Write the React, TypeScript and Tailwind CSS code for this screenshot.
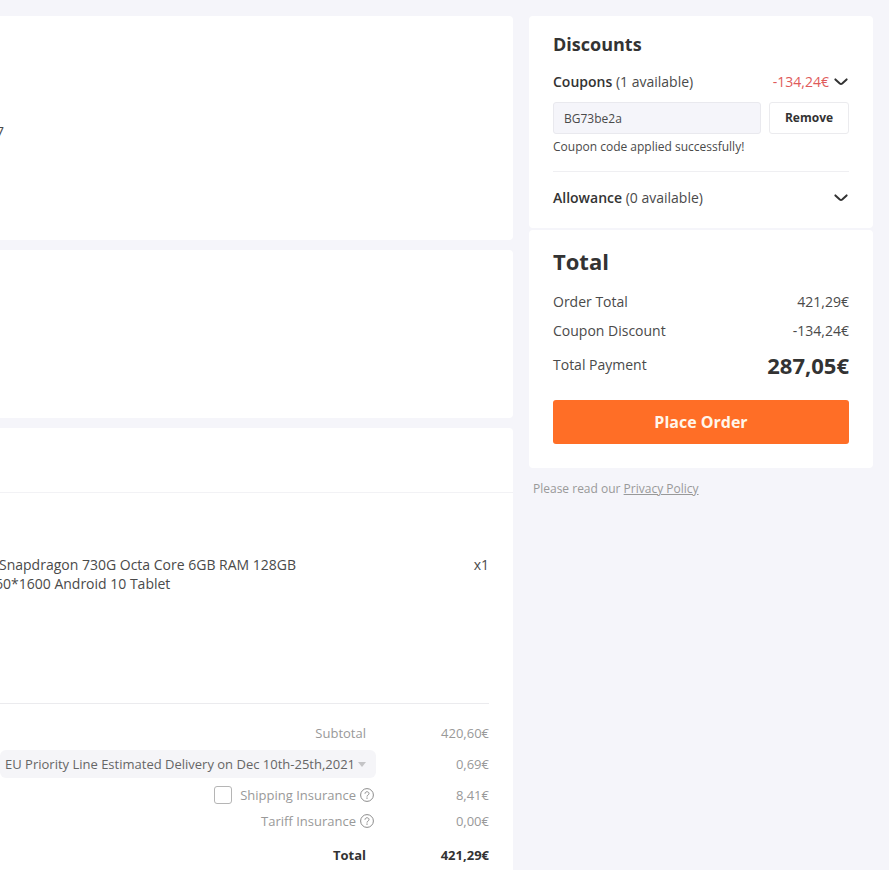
import type { ReactNode } from "react";

function Chevron() {
  return (
    <svg width="15" height="8" viewBox="0 0 15 8" fill="none" aria-hidden="true">
      <path d="M1.4 1.4 L5.8 5.5 Q7 6.5 8.2 5.5 L12.6 1.4" stroke="#333" strokeWidth="2" strokeLinecap="round" />
    </svg>
  );
}

function HelpIcon() {
  return (
    <svg width="14" height="14" viewBox="0 0 14 14" fill="none" stroke="#8c8c8c" aria-hidden="true">
      <circle cx="7" cy="7" r="6.4" />
      <path d="M5 5.7 C5 3.1 9 3.1 9 5.6 C9 7 7 7 7 8.6" />
      <path d="M7 9.6 V10.8" strokeWidth="1.2" />
    </svg>
  );
}

function CostRow({ label, value, className }: { label: ReactNode; value: string; className: string }) {
  return (
    <div className={`flex items-center justify-end ${className}`}>
      <dt className="flex items-center">{label}</dt>
      <dd className="w-[111px] shrink-0 text-right">{value}</dd>
    </div>
  );
}

function HelpButton({ label }: { label: string }) {
  return (
    <button type="button" aria-label={label} className="mr-1 ml-1">
      <HelpIcon />
    </button>
  );
}

export default function App() {
  return (
    <div className="flex h-screen items-start gap-4 overflow-hidden bg-[#f5f5fa] pt-4 pr-4 font-['Open_Sans',sans-serif] text-sm text-[#4a4a4a]">
      <main className="flex min-w-0 flex-1 flex-col gap-2.5">
        <section className="h-56 overflow-hidden rounded-r bg-white">
          <p className="-ml-1 pt-[106px] leading-5">7</p>
        </section>
        <section className="h-42 rounded-r bg-white" />
        <section className="rounded-r bg-white pb-6">
          <div className="h-[65px] border-b border-[#f2f2f5]" />
          <div className="mr-6 flex items-start justify-between border-b border-[#ebebee] pt-[62px] pb-[110px] leading-[19px]">
            <p className="-ml-px">
              Snapdragon 730G Octa Core 6GB RAM 128GB
              <br />
              <span className="-ml-1">60*1600 Android 10 Tablet</span>
            </p>
            <span>x1</span>
          </div>
          <dl className="mr-6 pt-[15px] text-[13px] text-[#999]">
            <CostRow className="h-7" label={<span className="mr-3">Subtotal</span>} value="420,60€" />
            <CostRow
              className="mt-[3px] h-7"
              label={
                <span className="relative mr-0.5 flex items-center">
                  <select
                    aria-label="Shipping method"
                    className="h-7 appearance-none rounded-md bg-[#f5f5f8] pr-5 pl-[5px] text-[#666]"
                  >
                    <option>EU Priority Line Estimated Delivery on Dec 10th-25th,2021</option>
                  </select>
                  <svg className="pointer-events-none absolute right-2.5" width="8" height="5" viewBox="0 0 8 5" aria-hidden="true">
                    <path d="M0 0H8L4 5Z" fill="#c4c4c6" />
                  </svg>
                </span>
              }
              value="0,69€"
            />
            <CostRow
              className="mt-1 h-[26px]"
              label={
                <>
                  <label className="flex items-center gap-2">
                    <input type="checkbox" className="size-[18px] appearance-none rounded-[3px] border border-[#b5b5b5] bg-white" />
                    Shipping Insurance
                  </label>
                  <HelpButton label="About shipping insurance" />
                </>
              }
              value="8,41€"
            />
            <CostRow
              className="h-[26px]"
              label={
                <>
                  Tariff Insurance
                  <HelpButton label="About tariff insurance" />
                </>
              }
              value="0,00€"
            />
            <CostRow className="mt-2 h-[26px] font-bold text-[#333]" label={<span className="mr-3">Total</span>} value="421,29€" />
          </dl>
        </section>
      </main>

      <aside className="w-[344px] shrink-0">
        <section className="rounded bg-white px-6 pt-4 pb-5">
          <h2 className="text-lg leading-6 font-bold text-[#333]">Discounts</h2>
          <button type="button" className="mt-4 flex w-full items-center leading-5">
            <span className="font-semibold text-[#333]">Coupons</span>&nbsp;(1 available)
            <span className="mr-[5px] ml-auto text-[#e05a5a]">-134,24€</span>
            <Chevron />
          </button>
          <form className="mt-2.5 flex gap-2 pb-[15px]" onSubmit={(e) => e.preventDefault()}>
            <div className="min-w-0 flex-1">
              <input
                aria-label="Coupon code"
                defaultValue="BG73be2a"
                className="h-8 w-full rounded-[3px] border border-[#e9e9ee] bg-[#f5f5fa] px-2.5 text-xs"
              />
              <p className="mt-1 text-xs leading-[18px]">Coupon code applied successfully!</p>
            </div>
            <button type="button" className="h-8 w-20 rounded-[3px] border border-[#ebebee] text-xs font-bold text-[#333]">
              Remove
            </button>
          </form>
          <button type="button" className="flex w-full items-center border-t border-[#efeff2] pt-4 leading-5">
            <span className="font-semibold text-[#333]">Allowance</span>&nbsp;(0 available)
            <span className="ml-auto">
              <Chevron />
            </span>
          </button>
        </section>

        <section className="mt-0.5 rounded bg-white px-6 pt-[15px] pb-6">
          <h2 className="text-[22px] leading-8 font-bold text-[#333]">Total</h2>
          <dl className="mt-[15px] leading-5">
            <div className="flex justify-between">
              <dt>Order Total</dt>
              <dd>421,29€</dd>
            </div>
            <div className="mt-[9px] flex justify-between">
              <dt>Coupon Discount</dt>
              <dd>-134,24€</dd>
            </div>
            <div className="mt-2 flex items-center justify-between">
              <dt>Total Payment</dt>
              <dd className="text-[22px] leading-8 font-bold text-[#333]">287,05€</dd>
            </div>
          </dl>
          <button type="button" className="mt-[19px] h-11 w-full rounded-[3px] bg-[#ff6e26] text-base font-bold text-[#fff6ea]">
            Place Order
          </button>
        </section>
        <p className="mt-3 ml-1 text-xs leading-[18px] text-[#999]">
          Please read our{" "}
          <a href="#privacy" className="underline">
            Privacy Policy
          </a>
        </p>
      </aside>
    </div>
  );
}
